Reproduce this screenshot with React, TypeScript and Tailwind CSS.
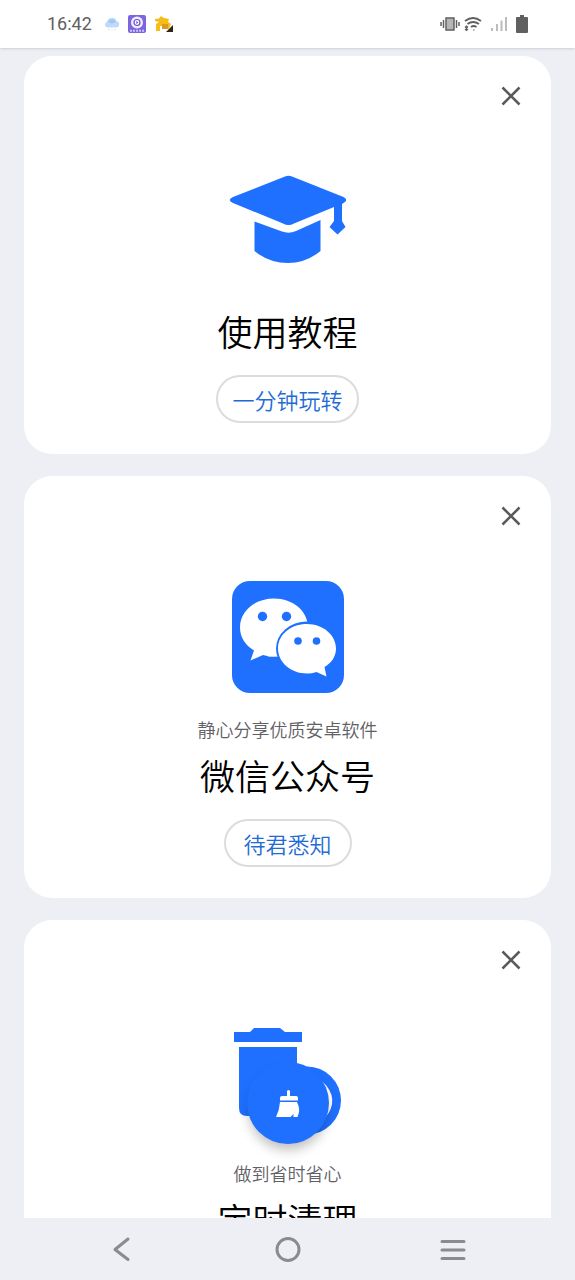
import React from 'react';

interface TipCard {
  id: string;
  title: string;
  subtitle?: string;
  action?: string;
  icon: React.ReactNode;
}

const GraduationIcon = () => (
  <svg viewBox="0 0 120 112" className="h-28 w-30" fill="#1f70ff" aria-hidden="true">
    <path d="M57 15.500Q60.500 14 64 15.500L115.500 36Q121 39 115.500 42L114 43V60L117.500 66L109.500 73.500L101.500 66L106 60V46L66 62.500Q60.500 65.500 55 62.500L5 42Q-1.500 39 5 36Z" />
    <path d="M26.500 60.500L54 70.500Q61 73 68 70L92.500 59V90Q78 102 60 102Q41 102 26.500 90Z" />
  </svg>
);

const WechatIcon = () => (
  <svg viewBox="0 0 112 112" className="size-28" aria-hidden="true">
    <rect width="112" height="112" rx="18" fill="#1f70ff" />
    <path d="M42 17.500C61 17.500 76 30 76 46.500S61 75.500 42 75.500Q36 75.500 31 74L18.500 79.500L22 69.500C13 64 8 56 8 46.500C8 30 23 17.500 42 17.500Z" fill="#fff" />
    <path d="M40 70L47 75.500H36Z" fill="#fff" />
    <ellipse cx="75" cy="67.500" rx="31" ry="27" fill="#1f70ff" />
    <path d="M75 43C91 43 104 54 104 67.500C104 75 100 81.500 92.500 86L94.500 95.500L84.500 91Q80 92.500 75 92.500C59 92.500 46 81.500 46 67.500S59 43 75 43Z" fill="#fff" />
    <circle cx="30.500" cy="35.500" r="4.700" fill="#1f70ff" />
    <circle cx="54.500" cy="35.500" r="4.700" fill="#1f70ff" />
    <circle cx="66" cy="60" r="3.800" fill="#1f70ff" />
    <circle cx="84.500" cy="60" r="3.800" fill="#1f70ff" />
  </svg>
);

const CleanIcon = () => (
  <svg viewBox="0 0 112 112" className="size-28" aria-hidden="true">
    <path d="M2 7H18L22 3H48L53 7H70V17H2ZM7 22H65V91H15Q7 91 7 83Z" fill="#1f70ff" />
    <circle cx="75" cy="75.500" r="34" fill="#1f70ff" />
    <path d="M90 56Q109 74 93 93Q97 75 90 56Z" fill="#fff" />
  </svg>
);

const CloseIcon = () => (
  <svg viewBox="0 0 20 20" className="size-5" fill="none" stroke="#5a5a5a" strokeWidth="2.500" aria-hidden="true">
    <path d="M1.500 1.500L18.500 18.500M18.500 1.500L1.500 18.500" />
  </svg>
);

const cards: TipCard[] = [
  { id: 'tutorial', title: '使用教程', action: '一分钟玩转', icon: <GraduationIcon /> },
  { id: 'wechat', title: '微信公众号', subtitle: '静心分享优质安卓软件', action: '待君悉知', icon: <WechatIcon /> },
  { id: 'clean', title: '定时清理', subtitle: '做到省时省心', icon: <CleanIcon /> },
];

const StatusBar = () => (
  <header className="z-10 flex h-12 shrink-0 items-center justify-between bg-white px-[47px] shadow-sm">
    <div className="flex items-center gap-2">
      <span className="mr-1 font-[Roboto] text-lg text-[#606060]">16:42</span>
      <svg viewBox="0 0 16 16" className="size-4" aria-hidden="true">
        <path d="M3.500 11.500A3 3 0 0 1 3 5.700A5 5 0 0 1 12.500 5A3.300 3.300 0 0 1 12.500 11.500Z" fill="#bfdaf8" />
        <path d="M4 6A4.500 4.500 0 0 1 12 5.500Q8 9 4 6Z" fill="#a0c6f3" />
        <path d="M5 13v1M8 13.500v1M11 13v1" stroke="#bfdaf8" strokeWidth="1.200" />
      </svg>
      <svg viewBox="0 0 18 18" className="size-[18px]" aria-hidden="true">
        <rect width="18" height="18" rx="2" fill="#7c66de" />
        <circle cx="9" cy="7.500" r="6" fill="#f1edff" />
        <circle cx="9" cy="7.500" r="3" fill="#fff" stroke="#6750cf" strokeWidth="1.200" />
        <path d="M8.300 6L10.500 7.500L8.300 9Z" fill="#6750cf" />
        <path d="M2 15.800H16" stroke="#cbbfff" strokeWidth="2" strokeDasharray="2 1" />
      </svg>
      <svg viewBox="0 0 20 18" className="h-[18px] w-5" aria-hidden="true">
        <path d="M1 4L5 3.500L7 1L10 3L15 4L14 7L17 9L15 14H12V11H6V16H2V9L5 7L1 6Z" fill="#f4bd18" />
        <path d="M8 9H14V14H8Z" fill="#dc9a24" />
        <path d="M19 10V17H12Z" fill="#2d2719" />
      </svg>
    </div>
    <div className="flex items-center gap-1 text-[#606060]">
      <svg viewBox="0 0 20 16" className="h-4 w-5" fill="none" stroke="currentColor" aria-hidden="true">
        <rect x="6" y="2" width="8" height="12" fill="#b5b5b5" strokeWidth="1.500" />
        <path d="M3.500 4V12M16.500 4V12M1 6V10M19 6V10" strokeWidth="1.500" />
      </svg>
      <svg viewBox="0 0 18 16" className="h-4 w-[18px]" fill="none" stroke="currentColor" strokeWidth="1.800" aria-hidden="true">
        <path d="M1 5Q9 -1 17 5M3.500 8Q9 4 15 8M7 11Q9.500 9 12.500 11" />
        <path d="M9 14H10.500M2.500 10V14M1 11.500L2.500 10L4 11.500M1 13L2.500 14.500L4 13" strokeWidth="1.200" />
      </svg>
      <svg viewBox="0 0 18 16" className="ml-1 h-4 w-[18px]" stroke="#bcbcbc" strokeWidth="2" aria-hidden="true">
        <path d="M2 15V12M7 15V8M11.500 15V4.500M16 15V1" />
      </svg>
      <svg viewBox="0 0 12 20" className="ml-1 h-5 w-3" fill="currentColor" aria-hidden="true">
        <path d="M4 1H8V3H11Q12 3 12 4V18Q12 19 11 19H1Q0 19 0 18V4Q0 3 1 3H4Z" />
      </svg>
    </div>
  </header>
);

const Card = ({ card, onClose }: { card: TipCard; onClose: () => void }) => (
  <section className="flex shrink-0 flex-col items-center rounded-[28px] bg-white pb-[31px]">
    <div className="flex w-full justify-end pt-5 pr-5">
      <button type="button" aria-label="关闭" onClick={onClose} className="flex size-10 items-center justify-center">
        <CloseIcon />
      </button>
    </div>
    <div className="mt-[45px] mb-6">{card.icon}</div>
    {card.subtitle && <p className="text-[18px] leading-6 font-[350] text-[#5f6166]">{card.subtitle}</p>}
    <h2 className="mt-2.5 text-[35px] leading-[48px] font-[350] text-black">{card.title}</h2>
    {card.action && (
      <button
        type="button"
        className="mt-5 h-12 min-w-32 rounded-full border-2 border-[#dcdcdc] px-3.5 text-[22px] leading-6 font-[350] text-[#1f6bd6]"
      >
        {card.action}
      </button>
    )}
  </section>
);

const NavigationBar = () => (
  <nav className="flex h-[62px] shrink-0 items-center justify-between bg-[#edeff5] px-[108px] text-[#8a8b90]">
    <button type="button" aria-label="返回">
      <svg viewBox="0 0 28 28" className="size-7" fill="none" stroke="currentColor" strokeWidth="3" strokeLinecap="round" strokeLinejoin="round">
        <path d="M20 4L7 14.500L20 24.500" />
      </svg>
    </button>
    <button type="button" aria-label="主页">
      <svg viewBox="0 0 28 28" className="size-7" fill="none" stroke="currentColor" strokeWidth="3">
        <circle cx="14" cy="14.500" r="11" />
      </svg>
    </button>
    <button type="button" aria-label="最近任务">
      <svg viewBox="0 0 28 28" className="size-7" fill="none" stroke="currentColor" strokeWidth="3" strokeLinecap="round">
        <path d="M3 6.500H25M3 15H25M3 23.500H25" />
      </svg>
    </button>
  </nav>
);

const App: React.FC = () => {
  const [closed, setClosed] = React.useState<string[]>([]);

  return (
    <div className="flex h-screen flex-col overflow-hidden bg-[#edeff5] font-['Noto_Sans_CJK_SC',sans-serif]">
      <StatusBar />
      <div className="relative min-h-0 flex-1">
        <main className="flex h-full flex-col gap-[22px] overflow-hidden px-6 pt-2">
          {cards
            .filter((card) => !closed.includes(card.id))
            .map((card) => (
              <Card key={card.id} card={card} onClose={() => setClosed([...closed, card.id])} />
            ))}
        </main>
        {/* Floating clean button */}
        <button
          type="button"
          aria-label="清理"
          className="absolute bottom-[74px] left-1/2 flex size-[82px] -translate-x-1/2 items-center justify-center rounded-full bg-[#1f70ff] shadow-[0_8px_12px_-2px_rgba(0,0,0,0.25)]"
        >
          <svg viewBox="0 0 26 28" className="h-7 w-[26px]" fill="#fff" aria-hidden="true">
            <path d="M12 2Q13.500 0 15 2V7H21Q23 7 23 9V11.500H5V9Q5 7 7 7H12Z" />
            <path d="M5 13H22Q26 21 22.500 28H18.500V25L15.500 28H1Q4.500 21 5 13Z" />
          </svg>
        </button>
      </div>
      <NavigationBar />
    </div>
  );
};

export default App;
